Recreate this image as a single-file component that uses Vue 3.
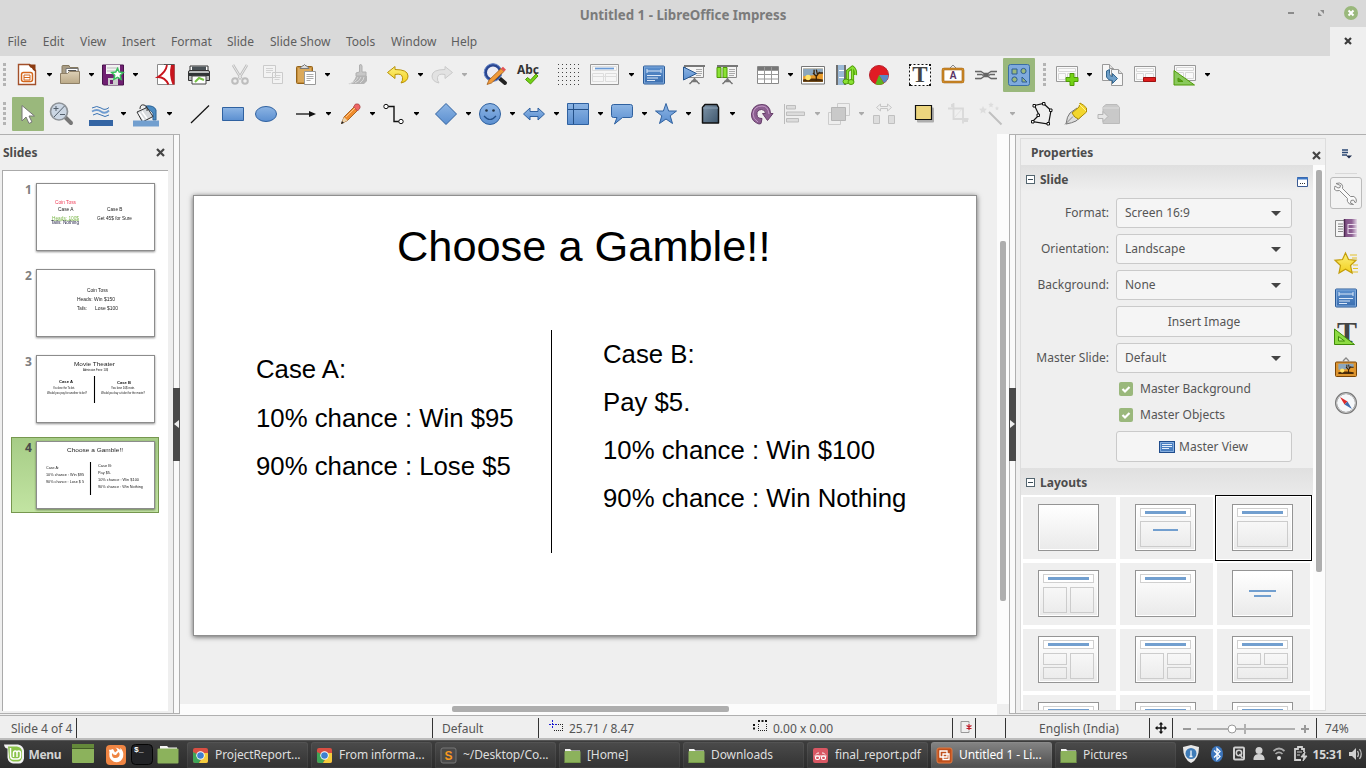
<script setup>
const menus = [
  ['File', 35.3], ['Edit', 37.2], ['View', 42], ['Insert', 49], ['Format', 56], ['Slide', 43],
  ['Slide Show', 76], ['Tools', 45], ['Window', 60], ['Help', 40]
]

// Toolbar entries: [icon, space before it]; "dd" is a drop-down arrow, "grip" a drag handle
const standardBar = [
  ['grip', 3], ['new', 9], ['dd', 7], ['open', 5], ['dd', 6], ['save', 6], ['dd', 7], ['pdf', 15], ['print', 9],
  ['cut', 17], ['copy', 9], ['paste', 9], ['dd', 6], ['brush', 15], ['undo', 16], ['dd', 7], ['redo', 6], ['ddoff', 7],
  ['find', 15], ['spell', 9], ['gridDots', 16], ['layout', 12], ['dd', 12], ['master', 7], ['show', 16], ['showCur', 9],
  ['table', 17], ['dd', 7], ['image', 7], ['media', 9], ['chart', 9], ['textbox', 17], ['fontwork', 9], ['link', 9],
  ['shapes', 9, true], ['grip', 12], ['addSlide', 9], ['dd', 7], ['dupSlide', 7], ['delSlide', 9], ['slideLayout', 16], ['dd', 7]
]
const drawingBar = [
  ['grip', 3], ['select', 10, true], ['zoom', 9], ['lineColor', 16], ['dd', 7], ['fill', 7], ['dd', 8], ['line', 15],
  ['rect', 9], ['ellipse', 9], ['arrow', 16], ['dd', 7], ['pencil', 6], ['dd', 7], ['connector', 6], ['dd', 7],
  ['diamond', 14], ['dd', 7], ['smiley', 6], ['dd', 7], ['dblArrow', 6], ['dd', 7], ['flow', 6], ['dd', 7],
  ['callout', 6], ['dd', 7], ['star', 6], ['dd', 7], ['cube', 6], ['dd', 7], ['rotate', 14], ['align', 9], ['ddoff', 7],
  ['arrange', 6], ['ddoff', 7], ['distribute', 7], ['shadow', 16], ['crop', 10], ['wand', 9], ['ddoff', 6],
  ['points', 15], ['glue', 9], ['extrude', 9]
]

const blueStar = 'M12 1.5L14.6 9H22.5L16.2 13.8L18.5 21.5L12 17L5.5 21.5L7.8 13.8L1.5 9H9.4Z'
const page = (x, y, c = '#999') => `<path d="M${x} ${y}h7l4 4v12h-11z" fill="#f7f7f7" stroke="${c}"/><path d="M${x + 7} ${y}v4h4" fill="#ddd" stroke="${c}"/>`
const slideBase = '<path d="M1.5 3.500h21v15h-21z" fill="#fafafa" stroke="#999"/><path d="M3.500 5.500h17v3h-17zM3.500 10.500h7v6h-7zM12.500 10.500h8v6h-8z" fill="none" stroke="#d8d8d8"/>'
const masterIcon = '<rect x="1.500" y="3" width="21" height="18" rx="1" fill="url(#gBlue2)" stroke="#2a5a96"/><rect x="2.500" y="4" width="19" height="16" fill="none" stroke="#7fa8da"/><path d="M5 6v4M19 6v4M5 8h14M5 12.500h14M5 15h11M5 17.500h8" stroke="#dbe8f8" fill="none"/>'
const pictureIcon = '<rect x="3" y="6" width="18" height="12" fill="#e89a2a"/><path d="M3 6h18v4q-9 3-18 3z" fill="#8ba6bd"/><path d="M3 16q9-2 18 0v2h-18z" fill="#4a2c0a"/><circle cx="7.500" cy="14" r="2.500" fill="#ffe36a"/><path d="M15 17v-4l-3-3M15 13l3-4M16 11l-1-4M17 10h4M13 11v-4" stroke="#3a2208" fill="none" stroke-width="1.200"/>'
const screenBase = '<path d="M3.500 3.500h18v11h-18z" fill="#f4f4f4" stroke="#8a8a8a"/><path d="M2 3h21" stroke="#777" stroke-width="2"/><path d="M14 6.500h6M14 8.500h6M14 10.500h6M14 12.500h5" stroke="#aaa"/><path d="M12.500 15v3M12.500 16l-5 5M12.500 16l5 5M9 18.500h7" stroke="#777" stroke-width="1.500" fill="none"/>'

const icons = {
  new: '<path d="M3.500 1.500h11l6 6v14h-17z" fill="#fff" stroke="#a3502a" stroke-width="1.400"/><path d="M13.500 1.500h7v7q-3-1-3.500-3.500-2 0-3.500-3.500z" fill="#8c3c12"/><rect x="6.500" y="9.500" width="11" height="9" rx="2" fill="#fff" stroke="#d4671c" stroke-width="1.500"/><path d="M9 12h6v5h-6z" fill="none" stroke="#d4671c"/><path d="M9 14.500h6" stroke="#d4671c"/>',
  open: '<path d="M4 3.500q0-1 1-1h6l1 2h8v9H4z" fill="#a99d85" stroke="#85795f"/><path d="M8 5.500h12v7H8z" fill="#fff" stroke="#777"/><path d="M10 7.500h8v5h-8" stroke="#555" fill="#ddd"/><path d="M2.500 10.500h7l2-2h10v12h-19z" fill="url(#gFold)" stroke="#8f8067"/>',
  save: '<path d="M1.500 2h21v20h-20l-1-1z" fill="#702072" stroke="#47134a"/><path d="M5 2h14v9H5z" fill="#f2f2f2"/><path d="M6 5h12M6 8h12" stroke="#bbb"/><path d="M7 15h10v7H7z" fill="#ccc"/><path d="M9 17h3v4H9z" fill="#702072"/><path d="M16.500 5.500l1.700 3.600 4 .5-2.900 2.700.8 4-3.600-2-3.600 2 .8-4-2.900-2.700 4-.5z" fill="#fff" stroke="#39c05e" stroke-width="1.500"/>',
  pdf: '<path d="M3.500 1.500h17v20h-17z" fill="#fff" stroke="#8a8a8a"/><path d="M10 1.500h10.500" stroke="#555"/><path d="M13 2q-1 7-9 12 7 0 10.500 7.500" fill="none" stroke="#c8151d" stroke-width="1.800"/><path d="M17 2h3.500v19.500h-2q-4-10-1.500-19.500z" fill="#c8151d"/>',
  print: '<path d="M3 3h18v7H3z" fill="#fff" stroke="#333"/><path d="M5 3.500h14v4H5z" fill="#4a5257"/><path d="M1.500 9q0-1.500 1.500-1.500h18q1.500 0 1.500 1.500v8.500h-21z" fill="#b9bcbc" stroke="#333"/><path d="M2 10h20v3H2z" fill="#2f3436"/><path d="M5 13h14v8H5z" fill="#fff" stroke="#444"/><path d="M8 19l4-4 5 2" stroke="#74c243" stroke-width="2" fill="none"/>',
  cut: '<g stroke="#bdbdbd" fill="none"><path d="M5 2l8.500 14M19 2l-8.500 14" stroke-width="2.600"/><path d="M5 2l8.500 14M19 2l-8.500 14" stroke="#e9e9e9"/><circle cx="7" cy="18" r="2.800" stroke-width="2"/><circle cx="17" cy="18" r="2.800" stroke-width="2"/></g>',
  copy: '<path d="M2.500 2.500h12v12h-12zM11.500 9.500h10v11h-10z" fill="#f3f3f3" stroke="#cbcbcb"/><path d="M5 5.500h7M5 7.500h7M5 9.500h5M13.500 12.500h6M13.500 14.500h6M13.500 16.500h5" stroke="#d2d2d2"/>',
  paste: '<rect x="2.500" y="3.500" width="16" height="17" rx="1" fill="#c68f3d" stroke="#946319"/><rect x="4" y="5" width="13" height="14" fill="#dba95a"/><path d="M6 5.500l2-2.500h1q1.500-3 3 0h1l2 2.500z" fill="#ddd" stroke="#777"/><path d="M10.500 8.500h11v13h-11z" fill="#fff" stroke="#999"/><path d="M12.500 11.500h7M12.500 13.500h7M12.500 15.500h7M12.500 17.500h4" stroke="#aaa"/>',
  brush: '<path d="M13.500 2q2-1.500 2.500 1v6h4v4h-10v-3l3.500-1z" fill="#c7c7c7" stroke="#b0b0b0"/><path d="M10 13h11v5l-3 3H2q6-1 8-8z" fill="#b4b4b4"/><path d="M3 21q7-2 9-7M9 20q5-2 6-6M14 20q4-3 4-6" stroke="#d8d8d8" fill="none"/>',
  undo: '<path d="M9 3.500L1.500 9.500 9 15.500v-4q7-1.500 7.500 3 .5 3-1.500 5.500 7-1.500 7-7 0-6.500-13-6.500z" fill="url(#gGold)" stroke="#b8920a"/>',
  redo: '<path d="M15 3.500L22.500 9.500 15 15.500v-4q-7-1.500-7.500 3-.5 3 1.500 5.500-7-1.500-7-7 0-6.500 13-6.500z" fill="#e2e2e2" stroke="#cacaca"/>',
  find: '<path d="M15 14l7 6" stroke="#222" stroke-width="4" stroke-linecap="round"/><circle cx="10" cy="9.500" r="7.500" fill="#ececf4" stroke="#294690" stroke-width="3"/><circle cx="10" cy="9.500" r="8.800" fill="none" stroke="#6a89cb"/><path d="M4 21.500l2-4.500L18 5.500l3 3L8.500 20z" fill="#f09a3a" stroke="#9a5511" stroke-width=".7"/><path d="M18 5.500l2-1.800 3 3-2 1.800z" fill="#e35252"/>',
  spell: '<text x="1" y="11" font-family="Noto Sans" font-size="12" font-weight="700" fill="#333" textLength="22" lengthAdjust="spacingAndGlyphs">Abc</text><path d="M9.500 16.500l2-2 3 2.500 5.500-6 2 2-7.500 8z" fill="#73d216" stroke="#4e9a06"/>',
  gridDots: '<path d="M1 1.500h22M1 5.500h22M1 9.500h22M1 13.500h22M1 17.500h22M1 21.500h22" stroke="#444" stroke-dasharray="1 3" transform="translate(1 0)"/>',
  layout: '<path d="M-1.500 1.500h28v20h-28z" fill="#f6f6f6" stroke="#989898"/><path d="M.5 3.500h24v4H.5zM.5 10.500h11v8H.5zM13.500 10.500h11v8h-11zM.5 13.500h24" fill="none" stroke="#ddd"/><path d="M3 5.500h19" stroke="#6b9bd6" stroke-width="1.700"/>',
  master: masterIcon,
  show: screenBase + '<path d="M1.500 4v13l13-6.500z" fill="url(#gBlue)" stroke="#27568f"/>',
  showCur: screenBase + '<path d="M2 4.500h4v10H2zM8 4.500h4v10H8z" fill="#8ae234" stroke="#4e9a06"/>',
  table: '<path d="M1.500 3.500h21v17h-21z" fill="#fff" stroke="#888"/><path d="M2 4h20v3.500H2z" fill="#777"/><path d="M1.500 7.500h21M1.500 11.500h21M1.500 16h21M8.500 4v16.500M15.500 4v16.500" stroke="#999"/>',
  image: '<path d="M.5 3.500h23v17.500H.5z" fill="#fff" stroke="#777"/><g transform="translate(-1.200 -1) scale(1.100)">' + pictureIcon + '</g>',
  media: '<path d="M2 2h10v20H2z" fill="#9dbbd8"/><path d="M3 2v20M11 2v20" stroke="#444" stroke-width="2"/><path d="M3 2.500v20M11 2.500v20" stroke="#eee" stroke-dasharray="1 1"/><path d="M5 7.500h5M5 14.500h5" stroke="#fff"/><g fill="none" stroke-linejoin="round"><path d="M13.500 18.500V8l5-4q3.500 2.500 3 8M18.500 4v14.500" stroke="#4e9a06" stroke-width="3.200"/><path d="M13.500 18.500V8l5-4q3.500 2.500 3 8M18.500 4v14.500" stroke="#8ae234" stroke-width="1.500"/></g><g fill="#8ae234" stroke="#4e9a06"><ellipse cx="12" cy="18.500" rx="3" ry="2.500"/><ellipse cx="17" cy="19" rx="3" ry="2.500"/></g>',
  chart: '<circle cx="12" cy="12" r="9.500" fill="#e01b24" stroke="#b8202a"/><path d="M12 12h9.500a9.500 9.500 0 0 1-4.500 8z" fill="#5a87c4"/><path d="M12 12l5 8.500q-4.500 2.500-8.500.5z" fill="#5cb21e"/>',
  textbox: '<path d="M1.500 1.500h21v21h-21z" fill="#fff" stroke="#111" stroke-dasharray="2 2"/><path d="M1 1h2v2H1zM21 1h2v2h-2zM1 21h2v2H1zM21 21h2v2h-2z" fill="#111"/><text x="12" y="19" text-anchor="middle" font-family="Liberation Serif" font-weight="700" font-size="23" fill="#444">T</text>',
  fontwork: '<path d="M9 5l3-3 3 3" fill="none" stroke="#888"/><rect x="2" y="6" width="20" height="13" rx="1" fill="#fff" stroke="#9a5a08" stroke-width="2.600"/><rect x="2" y="6" width="20" height="13" fill="none" stroke="#e9a33a"/><text x="12" y="16" text-anchor="middle" font-family="Liberation Sans" font-weight="700" font-size="10" fill="#5c3566">A</text>',
  link: '<g fill="none" stroke="#666" stroke-width="1.300"><path d="M1 8.500h6l3 2h4l3-2h6M1 15.500h6l3-2h4l3 2h6M3 11.500h5M16 11.500h5M8 12h8"/></g><path d="M2 9.500h5M17 9.500h5M2 16.500h5M17 16.500h5" stroke="#bbb" stroke-width=".7"/>',
  shapes: '<rect x="1.500" y="1.500" width="21" height="21" rx="2" fill="#7faadd" stroke="#3a6ea5"/><g fill="#9ab87c" stroke="#2c5c94"><path d="M5 6h5v5H5zM15 14v5h5z"/><circle cx="16.500" cy="8" r="2.600"/><circle cx="7.500" cy="16.500" r="2.600"/></g>',
  addSlide: slideBase + '<path d="M15 10.500h4v4h4v4h-4v4h-4v-4h-4v-4h4z" fill="#73d216" stroke="#4e9a06"/>',
  dupSlide: page(2.5, 1.5) + page(11.5, 6.5) + '<path d="M6.500 8v6q2 4 6 3.500v3l5-5-5-5v3q-3 0-3-3v-4z" fill="#6f9fc8" stroke="#35678f"/>',
  delSlide: slideBase + '<path d="M10.500 14.500h12v4h-12z" fill="#dd1c1c" stroke="#a01010"/>',
  slideLayout: '<g transform="translate(0 -1)">' + slideBase + '</g><path d="M1 7.500v14.500h20.500z" fill="#8ac95c" stroke="#4e9a06"/><path d="M5 15v3.500h5z" fill="#579a2c" stroke="#4e9a06"/>',
  select: '<path d="M6 3.500v15.500l4-4 3 6.500 3-1.500-3-6h5.500z" fill="#fff" stroke="#777"/>',
  zoom: '<path d="M16 15l6 6" stroke="#777" stroke-width="4" stroke-linecap="round"/><circle cx="10" cy="9.500" r="8.500" fill="#cbd6e3" stroke="#8e9398" stroke-width="1.700"/><path d="M5 15L15.500 4M7 4v5M4.500 6.500h5M11 12.500h5" stroke="#54606c" fill="none"/>',
  lineColor: '<path d="M3 6q5-3 9 0t8-.5M4 13q4-3 8 0t8 0" fill="none" stroke="#3c74b4"/><path d="M3 9.500q5-3 9 0t8-1" fill="none" stroke="#6f9cd0" stroke-width="1.800"/><path d="M0 18h24v6H0z" fill="#3465a4"/>',
  fill: '<path d="M12 4q8-1 10 4v10h-3v-7q-2-3-7-4z" fill="#4b8bc2" stroke="#2d6396"/><path d="M3 10L13 5.500l6 9L8.500 20z" fill="#d7dadd" stroke="#333"/><path d="M5 11l5 7M8 9.500l5 7" stroke="#fff" stroke-width="1.500"/><path d="M6 7q0-5 4-4t3 6" fill="none" stroke="#333"/><path d="M-1 18.500h26v6H-1z" fill="#729fcf"/>',
  line: '<path d="M3 21L21 3.500" stroke="#111" stroke-width="1.200"/>',
  rect: '<path d="M1.500 5.500h21v13h-21z" fill="url(#gBlue)" stroke="#2f61a0"/>',
  ellipse: '<ellipse cx="12" cy="12" rx="10.500" ry="7.500" fill="url(#gBlue)" stroke="#2f61a0"/>',
  arrow: '<path d="M2 12h14" stroke="#111" stroke-width="1.300"/><path d="M15 9l7 3-7 3z" fill="#111"/>',
  pencil: '<path d="M3.500 21.500l2.500-6.500L16 5l3.500 3.500L9.500 18.500z" fill="#ef8c2c" stroke="#955010" stroke-width=".8"/><path d="M6 15l3.500 3.500-6 3z" fill="#e9d2ac"/><path d="M3 22l1-3 2 2z" fill="#222"/><path d="M15.500 5l2-3h3l1.500 2v2l-2.500 3z" fill="#e66" stroke="#a44" stroke-width=".8"/><path d="M8 15L17 6" stroke="#ffc589"/>',
  connector: '<path d="M5 4.500h7v15h6" fill="none" stroke="#111" stroke-width="1.400"/><circle cx="4" cy="4.500" r="2.200" fill="#fff" stroke="#111"/><circle cx="19" cy="19.500" r="2.200" fill="#fff" stroke="#111"/>',
  diamond: '<path d="M12 1.500L22.500 12 12 22.500 1.500 12z" fill="url(#gBlue)" stroke="#2f61a0"/>',
  smiley: '<circle cx="12" cy="12" r="10.500" fill="url(#gBlue)" stroke="#2f61a0"/><circle cx="8.500" cy="8.500" r="1.300" fill="#234"/><circle cx="15.500" cy="8.500" r="1.300" fill="#234"/><path d="M6 14q6 7 12 0" fill="none" stroke="#234f86" stroke-width="1.200"/>',
  dblArrow: '<path d="M1.500 12L8 6v3.500h8V6l6.500 6-6.500 6v-3.500H8V18z" fill="url(#gBlue)" stroke="#2f61a0"/>',
  flow: '<path d="M1.500 1.500h21v21h-21z" fill="url(#gBlue)" stroke="#2f61a0"/><path d="M7.500 2v20M2 7.500h20" stroke="#234f86"/>',
  callout: '<path d="M3.500 2.500h17q2 0 2 2v9q0 2-2 2h-8L4.500 22l2.500-6.500H3.500q-2 0-2-2v-9q0-2 2-2z" fill="url(#gBlue)" stroke="#2f61a0"/>',
  star: `<path d="${blueStar}" fill="url(#gBlue)" stroke="#2f61a0"/>`,
  cube: '<path d="M4.500 5.500l2.500-3h12l1.500 3v15.500h-16z" fill="url(#gSlate)" stroke="#111" stroke-width="1.500" stroke-linejoin="round"/><path d="M5 6h15" stroke="#8aa0b5"/>',
  rotate: '<path d="M9 22q-8-2.500-7.500-10Q2.500 2.500 12 2.500q8 0 8.500 9H23l-5.500 7-5-7h3q0-4-4-4-5 .5-4.500 5 0 4 5 4l-1 5z" fill="#8c5f91" stroke="#663e6a"/><path d="M8 20q-5-3-5-8 1-8 9-8 6 0 7 8" fill="none" stroke="#c39ac6"/>',
  align: '<path d="M1.500 2v20" stroke="#bbb"/><path d="M3.500 3.500h9v3.500h-9zM3.500 10h18v3.500h-18zM3.500 16.500h12v3.500h-12z" fill="#dcdcdc" stroke="#bdbdbd"/>',
  arrange: '<path d="M10.500 1.500h12v12h-12z" fill="#eee" stroke="#ccc"/><path d="M1.500 10.500h12v12h-12z" fill="#eee" stroke="#ccc"/><path d="M4.500 5.500h14v13h-14z" fill="#c9c9c9" stroke="#b5b5b5"/>',
  distribute: '<path d="M4.500 5.500l4-3.500v2.500h7V2l4 3.500-4 3.500V6.500h-7V9z" fill="#eee" stroke="#c6c6c6"/><path d="M1.500 13.500h6v8h-6zM16.500 13.500h6v8h-6z" fill="#ddd" stroke="#c0c0c0"/>',
  shadow: '<rect x="5" y="5.500" width="17" height="15" rx="1" fill="#777" opacity=".55"/><path d="M3.500 3.500h16v14h-16z" fill="#ecd57e" stroke="#111" stroke-width="1.200"/>',
  crop: '<path d="M7.500 1v16h15M2 6.500h15v15M6 2v3M18 19h4" fill="none" stroke="#d9d9d9" stroke-width="1.800"/><path d="M8 16L16 7" stroke="#e2e2e2"/>',
  wand: '<path d="M10 10l12.500 12.500" stroke="#c0c0c0" stroke-width="2"/><path d="M4 4l1.200 2.500 2.800.3-2 2 .5 2.700L4 10l-2.500 1.500.5-2.700-2-2 2.800-.3zM12 0l.7 1.700 2 .2-1.400 1.500.4 2L12 4.500 10.300 5.400l.4-2L9.300 1.900l2-.2zM18 4l.6 1.500 1.400.3-1 1 .2 1.500L18 7.600l-1.200.7.200-1.500-1-1 1.400-.3z" fill="#ddd"/>',
  points: '<path d="M3.500 3.500L12.500 1.500l7.500 7L17.500 22 1.500 19.500 8 13z" fill="none" stroke="#111" stroke-width="1.200"/><g fill="#fff" stroke="#111"><path d="M2 2.500h2.500V5H2zM11.500.5H14V3h-2.500zM18.500 7h2.500v2.500h-2.500zM16 20.500h2.500V23H16zM.5 18.500h2.500v2.500H.5zM6 12h2.500v2.500H6z"/></g>',
  glue: '<path d="M2 22q1-8 4-11l7-5 6 7-7 6q-4 2-10 3z" fill="#ddd" stroke="#777"/><path d="M8 11l7-6 1-4q4 2 6.500 5v4l-8 7q-4-1-6.500-6z" fill="#f3d62d" stroke="#ab8b08"/><path d="M1 22.500l8-8" stroke="#888"/><path d="M15 2l7 7" stroke="#fff29a"/>',
  extrude: '<path d="M6 5l3-2.500h11l2.500 3v16H6z" fill="#c9c9c9" stroke="#bbb"/><path d="M6 6h16" fill="none" stroke="#ddd"/><path d="M1 12.500h5V9.500l5 5-5 5v-3H1z" fill="#e6e6e6" stroke="#b5b5b5"/>',
  wrench: '<path d="M2 2.500q4-1.500 6 1 1 2 .5 4l8 8q4-1 5.500 2 1 3-.5 4.500l-2-3-2.500.5-.5 2.500 3 1.500q-5 .5-6-3-.5-1.500 0-3l-8-8q-3 1-5-1Q.500 6.500 1 5l3 2 2-.5.500-2z" fill="#fafafa" stroke="#888"/>',
  gallery: '<path d="M1.500 4.500h10v16h-10z" fill="#f5f5f5" stroke="#888"/><path d="M4 8h5M4 10.500h5M4 13h5M4 15.500h5" stroke="#888"/><path d="M10 3h13v18H10z" fill="url(#gPurple)"/><path d="M10.500 3v18" stroke="#4c2a50" stroke-width="1.500"/><path d="M14 8.500h9M14 8v10M14 12.500h9M14 17.500h9" stroke="#eadcec" fill="none"/>',
  animation: '<path d="M16 4h7M18 7h5M19 14h5M19 17.500h5M18 21h6" stroke="#e3c22a" stroke-width="1.200"/><path d="M11.500 2l3 6.500 7.500.8-5.500 5.200 1.600 7.500-6.600-3.700L5 22l1.500-7.500L1 9.300l7.500-.8z" fill="url(#gGold)" stroke="#c39d0a" stroke-width="1.200"/>',
  styles: '<text x="13" y="21" text-anchor="middle" font-family="Liberation Serif" font-weight="700" font-size="30" fill="#444">T</text><path d="M.5 8v15.500h20z" fill="#8ddb42" stroke="#3f8a08"/><path d="M4.500 15.500v4.500h6z" fill="#b6ee7d" stroke="#3f8a08"/>',
  frame: '<path d="M9 5l3-3 3 3" fill="none" stroke="#888" stroke-width="1.300"/><rect x="1.500" y="6" width="21" height="14.500" rx="1" fill="#dc9430" stroke="#7a4506"/><g transform="translate(1.800 2.700) scale(.85)">' + pictureIcon + '</g>',
  compass: '<circle cx="12" cy="12" r="10" fill="#f6f8fa" stroke="#777" stroke-width="2"/><circle cx="12" cy="12" r="9.500" fill="none" stroke="#c6c6c6"/><path d="M6 6l7.500 4.500-3 3z" fill="#dd2a2a"/><path d="M18 18l-7.500-4.500 3-3z" fill="#3f6cae"/>',
  chrome: '<rect x="1" y="1" width="15" height="15" rx="2" fill="#d94f43"/><path d="M1 5v9q0 2 2 2h4l3-6-5-3z" fill="#3fa557"/><path d="M16 6v8q0 2-2 2H7l4-6-1-4z" fill="#f4cc3d"/><circle cx="8.500" cy="8.500" r="4.200" fill="#fff"/><circle cx="8.500" cy="8.500" r="3.300" fill="#3f7fd0"/>',
  sublime: '<rect x="1" y="1" width="15" height="15" rx="2" fill="#4a4a4a" stroke="#777"/><text x="8.500" y="13" text-anchor="middle" font-family="Liberation Sans" font-weight="700" font-size="12" fill="#f8981d">S</text>',
  folder: '<path d="M1 4V2h5l1.500 1.500H16V6H1z" fill="#f4f4f4"/><rect x=".5" y="4" width="16" height="12" rx="1" fill="#8cb25c"/><path d="M.5 15.500h16" stroke="#759a48"/>',
  pdfApp: '<rect x="1" y="1" width="15" height="15" rx="2" fill="#d95763"/><path d="M2.500 9h12M4 7.500q1-2 3-1.500M13 7.500q-1-2-3-1.500" stroke="#fff" fill="none"/><rect x="3.500" y="9" width="4" height="3.500" rx="1.500" fill="none" stroke="#fff" stroke-width="1.200"/><rect x="9.500" y="9" width="4" height="3.500" rx="1.500" fill="none" stroke="#fff" stroke-width="1.200"/>',
  impress: '<rect x="1" y="1" width="15" height="15" rx="2" fill="#c0501c" stroke="#e07b43"/><path d="M4 4h7v6H4zM7 7h6v5.500H7z" fill="#c0501c" stroke="#fff" stroke-width="1.300"/>'
}

const layouts = [
  [], ['t', [5, 17, 51, 26], 'l'], ['t', [5, 17, 51, 26]],
  ['t', [5, 17, 24, 26], [32, 17, 24, 26]], ['t'], ['c'],
  ['t', [5, 17, 24, 12], [5, 31, 24, 12], [32, 17, 24, 26]],
  ['t', [5, 17, 24, 26], [32, 17, 24, 12], [32, 31, 24, 12]],
  ['t', [5, 17, 24, 12], [32, 17, 24, 12], [5, 31, 51, 12]],
  ['t'], ['t'], ['t']
]

// Thumbnail lines: text, x, baseline, width, size, colour, weight
const thumbs = [
  { lines: [['Coin Toss', 19, 20.5, 21, 5, '#ef3b56'], ['Case A', 22, 27.7, 15.5, 5], ['Heads: 100$', 16, 36.5, 27, 5, '#7ab648'], ['Tails: Nothing', 15, 41, 28, 5, '#224'], ['Case B', 71, 27.7, 15.5, 5], ['Get 45$ for Sure', 61, 36.5, 35, 5]] },
  { lines: [['Coin Toss', 51, 23, 21, 5], ['Heads: Win $150', 41, 32, 38, 5], ['Tails:', 41, 41, 10, 5], ['Lose $100', 59, 41, 23, 5]] },
  { bar: [58.5, 21, 27], lines: [['Movie Theater', 38, 11, 41, 6.2], ['Admission Fees: 10$', 47, 16, 25, 3.4, '#111'], ['Case A', 23, 28, 14, 4.2, '#111', 700], ['Case B', 81, 28.7, 14, 4.2, '#111', 700], ['You lose the Ticket.', 17, 33.5, 22, 3.4, '#111'], ['Would you pay for another ticket?', 11, 38.5, 40, 3.4, '#111'], ['You lose 10$ note.', 75, 33.5, 24, 3.4, '#111'], ['Would you buy a ticket for the movie?', 65, 38.5, 44, 3.4, '#111']] },
  { bar: [54.5, 21, 33], sel: true, lines: [['Choose a Gamble!!', 31, 11, 56, 6.2], ['Case A:', 10, 28, 13, 4.2], ['10% chance : Win $95', 10, 35, 38, 4.2], ['90% chance : Lose $ 5', 10, 42, 38, 4.2], ['Case B:', 62, 26, 14, 4.2], ['Pay $5.', 62, 33, 13, 4.2], ['10% chance : Win $100', 62, 40, 41, 4.2], ['90% chance : Win Nothing', 62, 47, 45, 4.2]] }
]

const tabs = ['wrench', 'gallery', 'animation', 'master', 'styles', 'frame', 'compass']
const tasks = [
  ['chrome', 'ProjectReport...'], ['chrome', 'From informa...'], ['sublime', '~/Desktop/Co...'], ['folder', '[Home]'],
  ['folder', 'Downloads'], ['pdfApp', 'final_report.pdf'], ['impress', 'Untitled 1 - Li...', true], ['folder', 'Pictures']
]
</script>

<template>
  <div class="desk">
    <svg class="defs">
      <defs>
        <linearGradient id="gBlue" x1="0" y1="0" x2="0" y2="1"><stop offset="0" stop-color="#8db5e4" /><stop offset="1" stop-color="#5b8fd0" /></linearGradient>
        <linearGradient id="gBlue2" x1="0" y1="0" x2="0" y2="1"><stop offset="0" stop-color="#5c91cf" /><stop offset="1" stop-color="#3a6dae" /></linearGradient>
        <linearGradient id="gFold" x1="0" y1="0" x2="0" y2="1"><stop offset="0" stop-color="#ddd0b6" /><stop offset="1" stop-color="#bba987" /></linearGradient>
        <linearGradient id="gGold" x1="0" y1="0" x2="0" y2="1"><stop offset="0" stop-color="#fdf17e" /><stop offset="1" stop-color="#f2cf1c" /></linearGradient>
        <linearGradient id="gSlate" x1="0" y1="0" x2="1" y2="1"><stop offset="0" stop-color="#8096aa" /><stop offset="1" stop-color="#3e566c" /></linearGradient>
        <linearGradient id="gPurple"><stop offset="0" stop-color="#7b4b80" /><stop offset=".6" stop-color="#8f6294" /><stop offset="1" stop-color="#e3d8e5" /></linearGradient>
        <linearGradient id="gPage" x1="0" y1="0" x2="0" y2="1"><stop offset="0" stop-color="#fff" /><stop offset="1" stop-color="#eaeaea" /></linearGradient>
      </defs>
    </svg>

    <header class="titlebar">
      <span class="title">Untitled 1 - LibreOffice Impress</span>
      <svg class="winbtns" width="90" height="27" viewBox="0 0 90 27">
        <path d="M12 13h6" stroke="#8b8b8b" stroke-width="2" />
        <path d="M44 10h4v4zM42 12v4h4z" fill="#8b8b8b" />
        <circle cx="75" cy="13" r="7" fill="#9ab87c" />
        <path d="M72.500 10.500l5 5M77.500 10.500l-5 5" stroke="#fff" stroke-width="2" />
      </svg>
    </header>
    <nav class="menubar">
      <span v-for="m in menus" :key="m[0]" class="menu" :style="{ width: m[1] + 'px' }">{{ m[0] }}</span>
      <span class="docclose"><svg width="8" height="8" viewBox="0 0 8 8"><path d="M1 1l6 6M7 1L1 7" stroke="#3c3c3c" stroke-width="2.200" /></svg></span>
    </nav>

    <div class="bars">
      <div v-for="(bar, b) in [standardBar, drawingBar]" :key="b" class="toolbar">
        <div v-for="(t, i) in bar" :key="i" class="tool" :class="[t[0], { active: t[2] }]" :style="{ marginLeft: t[1] + 'px' }">
          <svg v-if="icons[t[0]]" width="24" height="24" viewBox="0 0 24 24" v-html="icons[t[0]]"></svg>
          <svg v-else-if="t[0] !== 'grip'" width="7" height="4" viewBox="0 0 7 4"><path d="M1 0h5v1L3.500 3.500 1 1z" :fill="t[0] === 'dd' ? '#000' : '#aaa'" /></svg>
        </div>
      </div>
    </div>

    <main class="work">
      <aside class="slides">
        <div class="panelhead"><b>Slides</b>
          <svg width="9" height="9" viewBox="0 0 9 9"><path d="M1 1l7 7M8 1L1 8" stroke="#444" stroke-width="2.200" /></svg>
        </div>
        <div class="slidelist">
          <div v-for="(s, i) in thumbs" :key="i" class="entry" :class="{ sel: s.sel }">
            <b class="num">{{ i + 1 }}</b>
            <svg class="thumb" width="119" height="68" viewBox="0 0 119 68">
              <rect x=".5" y=".5" width="118" height="67" fill="#fff" stroke="#8c8c8c" />
              <path v-if="s.bar" :d="`M${s.bar[0]} ${s.bar[1]}v${s.bar[2]}`" stroke="#000" stroke-width="1.100" />
              <text v-for="(l, k) in s.lines" :key="k" :x="l[1]" :y="l[2]" :textLength="l[3]" lengthAdjust="spacingAndGlyphs" :font-size="l[4]" :fill="l[5] || '#222'" :font-weight="l[6] || 400" :text-decoration="l[5] === '#7ab648' ? 'underline' : null">{{ l[0] }}</text>
            </svg>
          </div>
        </div>
      </aside>
      <div class="splitter left"><div class="handle"><svg width="7" height="10" viewBox="0 0 7 10"><path d="M6 1v8L1 5z" fill="#eee" /></svg></div></div>

      <section class="editor">
        <div class="canvas">
          <div class="page">
            <h1>Choose a Gamble!!</h1>
            <div class="case a"><p>Case A:</p><p>10% chance : Win $95</p><p>90% chance : Lose $5</p></div>
            <div class="divider"></div>
            <div class="case b"><p>Case B:</p><p>Pay $5.</p><p>10% chance : Win $100</p><p>90% chance : Win Nothing</p></div>
          </div>
        </div>
        <div class="vscroll"><i></i></div>
        <div class="hscroll"><i></i></div>
      </section>

      <div class="splitter right"><div class="handle"><svg width="7" height="10" viewBox="0 0 7 10"><path d="M1 1v8l5-4z" fill="#eee" /></svg></div></div>
      <aside class="side">
        <div class="props">
          <div class="prophead"><b>Properties</b>
            <svg width="9" height="9" viewBox="0 0 9 9"><path d="M1 1l7 7M8 1L1 8" stroke="#444" stroke-width="2.200" /></svg>
          </div>
          <div class="propbody">
            <div class="deck">
              <div class="sect"><i class="minus"></i><b>Slide</b>
                <svg width="11" height="10" viewBox="0 0 11 10"><path d="M.5.5h10v9H.5z" fill="#fff" stroke="#3b5a92" /><path d="M0 1.500h11" stroke="#3c78c8" stroke-width="2" /><path d="M3 6.500h1M5 6.500h1M7 6.500h1" stroke="#333" /></svg>
              </div>
              <div class="form">
                <label>Format:</label><div class="box drop">Screen 16:9<i></i></div>
                <label>Orientation:</label><div class="box drop">Landscape<i></i></div>
                <label>Background:</label><div class="box drop">None<i></i></div>
                <label></label><div class="box btn">Insert Image</div>
                <label>Master Slide:</label><div class="box drop">Default<i></i></div>
              </div>
              <div v-for="c in ['Master Background', 'Master Objects']" :key="c" class="check">
                <svg width="14" height="14" viewBox="0 0 14 14"><rect width="14" height="14" rx="2" fill="#9ab87c" /><path d="M3.500 7l2.500 2.500L10.500 5" fill="none" stroke="#fff" stroke-width="2.200" /></svg>{{ c }}
              </div>
              <div class="box btn mview"><svg width="16" height="12" viewBox="0 0 16 12"><rect x=".5" y=".5" width="15" height="11" fill="#4a7fc0" stroke="#1f4c8c" /><path d="M1.500 1.500h13v9h-13z" fill="none" stroke="#86aede" /><path d="M3 3.500h10M3 5.500h10M3 7.500h7" stroke="#e4eefa" /></svg>Master View</div>
              <div class="sect lay"><i class="minus"></i><b>Layouts</b></div>
              <div class="grid">
                <div v-for="(l, i) in layouts" :key="i" class="cell" :class="{ chosen: i === 2 }">
                  <svg width="61" height="47" viewBox="0 0 61 47">
                    <rect x=".5" y=".5" width="60" height="46" fill="#fff" stroke="#949494" />
                    <rect x="2" y="2" width="57" height="43" fill="url(#gPage)" />
                    <template v-for="(p, k) in l" :key="k">
                      <g v-if="p === 't'"><rect x="5.500" y="4.500" width="50" height="8" fill="#fff" stroke="#d0d0d0" /><path d="M10 8.500h41" stroke="#729fcf" stroke-width="3" /></g>
                      <path v-else-if="p === 'l'" d="M18 26h25" stroke="#729fcf" stroke-width="2" />
                      <path v-else-if="p === 'c'" d="M17 21h27M22 26h17" stroke="#729fcf" stroke-width="2" />
                      <rect v-else :x="p[0] + .5" :y="p[1] + .5" :width="p[2] - 1" :height="p[3] - 1" fill="none" stroke="#ccc" />
                    </template>
                  </svg>
                </div>
              </div>
            </div>
            <div class="pscroll"><i></i></div>
          </div>
        </div>
        <div class="tabs">
          <div class="tabmenu"><svg width="10" height="10" viewBox="0 0 10 10"><path d="M0 1h6M0 3.500h6M0 6h5" stroke="#2d4a75" stroke-width="1.300" /><path d="M4 6.500h6L7 9.500z" fill="#1d2c4e" /></svg></div>
          <div v-for="(t, i) in tabs" :key="t" class="tab" :class="{ on: i === 0 }"><svg width="24" height="24" viewBox="0 0 24 24" v-html="icons[t]"></svg></div>
        </div>
      </aside>
    </main>

    <footer class="status">
      <span class="st s1">Slide 4 of 4</span>
      <span class="st s2"></span>
      <span class="st s3">Default</span>
      <span class="st s4">
        <svg width="14" height="12" viewBox="0 0 14 12"><path d="M3.500 0v9M0 4.500h9" stroke="#1a1ad0" stroke-dasharray="2 1" /><path d="M5 10.500h9M13.500 4v7M9 4.500h5" stroke="#222" stroke-dasharray="1 1" /></svg><em class="pos">25.71 / 8.47</em>
        <svg width="14" height="12" viewBox="0 0 14 12"><path d="M1 4v7M5 1h9" stroke="#111" stroke-width="2" stroke-dasharray="2 1.500" /><path d="M5.500 4v7M5 10.500h9M13.500 4v7" stroke="#222" stroke-dasharray="1 1" /></svg><em>0.00 x 0.00</em>
      </span>
      <span class="st s5"><svg width="12" height="12" viewBox="0 0 12 12"><path d="M9 .5H1v11h8V9.500M9 2.500v-2" fill="none" stroke="#999" /><path d="M9 3v6M6.500 4.500l5 3M11.500 4.500l-5 3" stroke="#c01c28" stroke-width="1.200" /></svg></span>
      <span class="st s6"></span>
      <span class="st s7">English (India)</span>
      <span class="st s8"><svg width="12" height="12" viewBox="0 0 12 12"><path d="M6 1v10M1 6h10" stroke="#111" stroke-width="1.500" /><path d="M6 0l2.300 2.500H3.700zM6 12l2.300-2.500H3.700zM0 6l2.500-2.300v4.600zM12 6L9.500 3.700v4.600z" fill="#111" /></svg></span>
      <span class="st s9"><svg width="143" height="24" viewBox="1 0 143 24"><path d="M11 13h8M129 13h8M133 9v8" stroke="#999" stroke-width="2" /><path d="M25 13h98M73 8v10" stroke="#b0b0b0" stroke-width="2" /><circle cx="60" cy="13" r="4" fill="#fff" stroke="#999" /></svg></span>
      <span class="s10">74%</span>
    </footer>

    <footer class="taskbar">
      <svg class="launch" width="187" height="28" viewBox="0 0 187 28">
        <path d="M4 4.500h14q5 1 6 6v8q-1 5-5 5h-6q-5-1-5.500-6V8.500q-3 0-3.500-4z" fill="#f2f2f2" />
        <path d="M8 6.500h9q5 1 5 5v6q-1 4-4 4h-5q-4-1-4-5z" fill="#8bc34a" />
        <path d="M10.500 8v7.500q0 3.500 3 3.500h4q3 0 3-3v-3q0-2-1.800-2t-1.700 2v4M17 13q0-2-1.700-2t-1.800 2v4" fill="none" stroke="#fff" stroke-width="1.500" />
        <text x="28.500" y="18.500" font-family="Noto Sans" font-weight="700" font-size="12" textLength="33" fill="#d3d3d3">Menu</text>
        <rect x="72" y="4" width="22" height="19" rx="1" fill="#8cb25c" /><path d="M72 4h22v4H72z" fill="#64893a" /><path d="M72 8.500h22" stroke="#425c25" />
        <rect x="106" y="5" width="20" height="20" rx="4" fill="#ef8543" />
        <path d="M109 9q0 2 .5 3-1 5 2 8 4 4 9 1 4-4 2.500-9-1-3-3-4l.5 2q-2-2-5-2.500 2 1.500 2 3l-2.500 2-2-3.500q-2.500 1-3.500 1z" fill="#fff" />
        <path d="M112 13q1.500 2.500 4 2l2.500-3q2 2 .5 4.500-2 2-5 1.500-2.500-1-2-5z" fill="#ef8543" />
        <rect x="131.500" y="4.500" width="21" height="20" rx="4" fill="#222326" stroke="#050505" /><text x="134" y="12" font-family="Liberation Mono" font-size="8" font-weight="700" fill="#fff">$_</text>
        <path d="M160 8V6h7l1.500 1.500H177V10h-17z" fill="#f5f5f5" /><rect x="157.500" y="8.500" width="21" height="15" rx="1" fill="#8cb25c" />
      </svg>
      <div v-for="t in tasks" :key="t[1]" class="task" :class="{ cur: t[2] }">
        <svg width="17" height="17" viewBox="0 0 17 17" v-html="icons[t[0]]"></svg><span>{{ t[1] }}</span>
      </div>
      <svg class="tray" width="190" height="28" viewBox="0 0 190 28">
        <path d="M15 5l8 2q0 12-8 16Q7 19 7 7z" fill="#e8e8e8" /><circle cx="15" cy="13.500" r="5.500" fill="#3f7cb8" /><path d="M15 10.500v6M13.500 16.500h3" stroke="#e8f1fa" stroke-width="1.400" />
        <ellipse cx="41" cy="14" rx="6" ry="8" fill="#3d76bd" /><path d="M38 10.500l6 6-3 3v-11l3 3-6 6" fill="none" stroke="#fff" stroke-width="1.300" />
        <rect x="58" y="7.500" width="10" height="12" rx="1" fill="none" stroke="#d0d0d0" stroke-width="2" /><circle cx="63" cy="13" r="2.700" fill="none" stroke="#d0d0d0" stroke-width="1.500" /><path d="M63.500 14l3 4" stroke="#d0d0d0" stroke-width="1.500" />
        <circle cx="83" cy="10.500" r="3.500" fill="#d0d0d0" /><path d="M77.500 20v-2q1-4 5.500-4t5.500 4v2z" fill="#d0d0d0" />
        <path d="M97.500 11q5.500-5 11 0M99.500 14q3.500-3.500 7 0" fill="none" stroke="#aaa" stroke-width="1.700" /><circle cx="103" cy="18" r="2" fill="#e0e0e0" />
        <path d="M128 12V9h-2V7h-4v2h-3v11h6" fill="none" stroke="#d0d0d0" stroke-width="1.800" /><path d="M121 12h5M121 15h3M129 12l-4 5h3l-1 4 4-5h-3z" stroke="#d0d0d0" fill="#d0d0d0" />
        <text x="136.500" y="18.500" font-family="Noto Sans" font-weight="700" font-size="12" textLength="30" fill="#d6d6d6">15:31</text>
        <path d="M173 12h3l4-4v12l-4-4h-3z" fill="#d0d0d0" /><path d="M181.500 11q2 3 0 6M183.500 9q3.500 5 0 10" fill="none" stroke="#bbb" stroke-width="1.300" />
      </svg>
    </footer>
  </div>
</template>

<style>
body { margin: 0; background: #efefef; overflow: hidden; }
</style>
<style scoped>
.desk { width: 1366px; height: 768px; display: flex; flex-direction: column; background: #efefef; font: 12px/16px "Noto Sans", sans-serif; color: #555; overflow: hidden; }
.desk * { box-sizing: border-box; }
.desk b { font-weight: 700; }
svg { display: block; flex: none; overflow: visible; }
.defs { position: absolute; width: 0; height: 0; }
.titlebar { height: 27px; background: #d9d9d9; display: flex; justify-content: flex-end; position: relative; flex: none; }
.title { position: absolute; left: 0; right: 0; top: 6px; text-align: center; font-weight: 700; font-size: 13.300px; line-height: 18px; color: #7b7b7b; }
.menubar { height: 29px; background: #d9d9d9; display: flex; padding-left: 7.500px; flex: none; }
.menu { line-height: 29px; white-space: nowrap; color: #5e5e5e; }
.docclose { margin-left: auto; width: 36px; background: #efefef; display: flex; align-items: center; justify-content: center; padding-bottom: 2px; }
.bars { height: 78px; flex: none; }
.toolbar { height: 39px; display: flex; align-items: center; padding-bottom: 2px; }
.tool { flex: none; }
.tool.grip { width: 3px; height: 23px; background: repeating-linear-gradient(#b4b4b4 0 3px, transparent 3px 5px); }
.tool.active { height: 34px; margin-right: -4px; padding-right: 4px; border-radius: 1px; background: #9ab87c; box-shadow: -4px 0 0 #9ab87c; display: flex; align-items: center; }

.work { flex: 1; display: flex; min-height: 0; position: relative; border-bottom: 1px solid #b0b0b0; }
.slides { width: 173px; margin-bottom: 1px; border-top: 1px solid #b0b0b0; border-bottom: 1px solid #b0b0b0; padding: 35px 5px 2px 2px; position: relative; }
.panelhead { position: absolute; left: 3px; right: 8px; top: 10px; display: flex; justify-content: space-between; align-items: center; color: #4c4c4c; }
.panelhead svg { margin-top: -1px; }
.slidelist { background: #fff; height: 100%; border-top: 1px solid #aaa; border-left: 1px solid #aaa; padding: 8px 8px 0; display: flex; flex-direction: column; gap: 10px; }
.entry { height: 76px; width: 148px; padding: 3px 3px 4px 13px; border: 1px solid transparent; display: flex; justify-content: space-between; }
.entry.sel { background: linear-gradient(#a6cc86, #c2e4a2); border-color: #76974f; }
.num { color: #808080; line-height: 13px; }
.entry.sel .num { color: #4a4a4a; }
.thumb { filter: drop-shadow(0 1px 1px rgba(0, 0, 0, .45)); font-family: "Liberation Sans", sans-serif; }
.splitter { width: 7px; border: 1px solid #b0b0b0; margin-bottom: 1px; background: #fafafa; display: flex; align-items: center; }
.splitter .handle { width: 7px; height: 73px; margin: 0 -1px; background: #4a4a4a; display: flex; align-items: center; flex: none; }

.editor { flex: 1; display: grid; grid-template: 1fr 11px / 1fr 12px; min-width: 0; }
.canvas { position: relative; background: #efefef; }
.vscroll { background: #fcfcfc; padding: 107px 3px 0; }
.vscroll i { display: block; height: 360px; border-radius: 2px; background: #aeaeae; }
.hscroll { background: #fcfcfc; padding: 2px 0 0 272px; }
.hscroll i { display: block; width: 277px; height: 6px; border-radius: 2px; background: #aeaeae; }
.page { position: absolute; left: 13px; top: 61px; width: 784px; height: 441px; background: #fff; border: 1px solid #8f8f8f; box-shadow: 0 1px 5px rgba(0, 0, 0, .6); font-family: "Liberation Sans", sans-serif; color: #000; }
.page h1, .page p { margin: 0; font-weight: 400; white-space: nowrap; }
.page h1 { position: absolute; left: 203px; top: 26px; font-size: 43.350px; line-height: 49px; }
.case { position: absolute; font-size: 25.760px; line-height: 48.400px; }
.case.a { left: 62px; top: 149.300px; }
.case.b { left: 409px; top: 133.700px; line-height: 48.250px; }
.divider { position: absolute; left: 357px; top: 134px; width: 1px; height: 223px; background: #000; }

.side { width: 350px; border-top: 1px solid #b0b0b0; border-bottom: 1px solid #b0b0b0; margin-bottom: 1px; padding: 3px 0 2px 4px; display: flex; }
.props { width: 306px; border: 1px solid #ddd; display: flex; flex-direction: column; }
.prophead { height: 26px; flex: none; display: flex; justify-content: space-between; align-items: center; padding: 1px 4px 0 10px; color: #4c4c4c; }
.prophead svg { margin-top: 5px; }
.propbody { flex: 1; display: flex; min-height: 0; }
.deck { width: 292px; overflow: hidden; }
.pscroll { flex: 1; background: #fcfcfc; padding: 5px 3px 0; }
.pscroll i { display: block; height: 402px; width: 6px; border-radius: 2px; background: #aeaeae; }
.sect { height: 27px; background: linear-gradient(#dfdfdf, #efefef); display: flex; align-items: center; padding: 2px 5px 0 5px; color: #4c4c4c; }
.sect b { margin: 0 auto 0 5px; }
.sect svg { margin-top: 5px; }
.minus { width: 9px; height: 9px; border: 1px solid #53656f; background: linear-gradient(#3c4d58, #3c4d58) center / 5px 1px no-repeat #fff; margin-bottom: 1px; }
.form { display: grid; grid-template-columns: 88px 176px; gap: 6px 7px; padding-top: 6px; align-items: center; text-align: right; }
.box { height: 30px; border: 1px solid #cacaca; border-radius: 3px; background: #f5f5f5; display: flex; align-items: center; }
.drop { padding: 0 10px 0 8px; justify-content: space-between; }
.drop i { border: 5px solid transparent; border-top-color: #444; border-bottom: 0; }
.btn { justify-content: center; }
.form .btn { height: 31px; }
.check { display: flex; align-items: center; gap: 7px; height: 26px; padding-left: 98px; position: relative; top: 3px; }
.mview { width: 176px; height: 31px; margin: 6px 0 6px 95px; gap: 4px; padding-right: 1px; }
.sect.lay { background: linear-gradient(#e0e0e0, #eaeaea); }
.grid { background: #fff; display: grid; grid-template-columns: repeat(3, 93px); gap: 4px; padding: 2px; width: 100%; }
.cell { height: 62px; background: #efefef; padding: 7px 15px; position: relative; }
.cell.chosen::after { content: ""; position: absolute; inset: -2px; border: 1px solid #000; }
.tabs { flex: 1; display: flex; flex-direction: column; align-items: center; }
.tabmenu { width: 22px; height: 36px; padding: 11px 6px 0 7px; border-bottom: 1px solid #d8d8d8; margin-bottom: 3px; }
.tab { width: 32px; height: 35px; display: flex; align-items: center; justify-content: center; }
.tab.on { height: 32px; border: 1px solid #bbb; border-radius: 3px; margin-bottom: 1px; background: #f3f3f3; }

.status { height: 24px; flex: none; display: flex; border-bottom: 2px solid #bcbcbc; padding-top: 2px; line-height: 21px; }
.st { border-right: 1px solid #333; height: 20px; display: flex; align-items: center; flex: none; }
.status > * { white-space: nowrap; }
.s1 { width: 77px; padding-left: 11px; }
.s2 { width: 356px; }
.s3 { width: 106px; padding-left: 9px; }
.s4 { width: 414px; padding-left: 10px; }
.s4 em { font-style: normal; margin-left: 6px; }
.s4 svg { margin-top: -4px; }
.s4 .pos { width: 184px; }
.s5 { width: 23px; justify-content: center; padding-left: 3px; }
.s5 svg { margin-top: -2px; }
.s6 { width: 30px; }
.s7 { width: 144px; justify-content: center; padding-left: 3px; }
.s8 { width: 23px; justify-content: center; }
.s9 { width: 144px; }
.s10 { padding-left: 8px; }

.taskbar { height: 28px; flex: none; display: flex; background: linear-gradient(#3d3d3d, #2c2c2c); border-top: 1px solid #555; }
.launch, .tray { margin-top: -1px; }
.tray { margin-left: -3px; }
.task { width: 121px; margin-right: 3px; height: 26px; margin-top: 1px; border-radius: 3px 3px 0 0; background: linear-gradient(#4b4b4b, #333); box-shadow: inset 0 0 0 1px rgba(255, 255, 255, .05); display: flex; align-items: center; padding-left: 5px; color: #dedede; flex: none; white-space: nowrap; }
.task span { margin-left: 6px; letter-spacing: -.1px; }
.task.cur { background: linear-gradient(#858585, #4d4d4d); color: #fff; }
</style>
